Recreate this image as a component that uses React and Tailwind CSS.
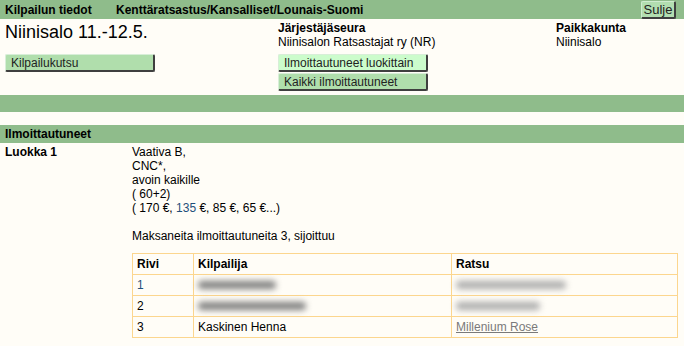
import React from "react";

const btn =
  "h-[18px] border-t border-l border-t-[#d8eed8] border-l-[#d8eed8] border-r-2 border-b-2 border-r-[#3f3f3f] border-b-[#3f3f3f] rounded-[2px] text-left pl-[5px] leading-[14px] text-[12px] text-[#222]";

function Blur({ w, dark }) {
  return (
    <div
      className={`h-[8px] rounded-full blur-[3px] ${dark ? "bg-[#7f7f7f]" : "bg-[#adadad]"}`}
      style={{ width: w }}
    />
  );
}

export default function App() {
  const rows = [
    { n: "1", rider: <Blur w={78} dark />, horse: <Blur w={110} /> },
    { n: "2", rider: <Blur w={108} dark />, horse: <Blur w={84} /> },
    {
      n: "3",
      rider: "Kaskinen Henna",
      horse: <span className="underline text-[#7a7a7a]">Millenium Rose</span>,
    },
  ];

  return (
    <div
      className="w-[684px] h-[346px] bg-[#fffdf7] text-black text-[12px] overflow-hidden"
      style={{ fontFamily: '"Liberation Sans", Arial, sans-serif' }}
    >
      {/* top bar */}
      <div className="h-[19px] bg-[#8fbc8b] flex items-center pl-[5px] pr-[8px] font-bold">
        <span className="w-[111px]">Kilpailun tiedot</span>
        <span>Kenttäratsastus/Kansalliset/Lounais-Suomi</span>
        <button className="ml-auto h-[18px] w-[35px] mt-[1px] bg-[#b2deb0] border-t border-l border-[#cfeccf] border-r-2 border-b-2 border-r-[#3f3f3f] border-b-[#3f3f3f] rounded-[2px] font-normal text-[13px] leading-[14px] text-[#222]">
          Sulje
        </button>
      </div>

      {/* info */}
      <div className="flex h-[76px]">
        <div className="w-[278px] pl-[5px]">
          <div className="text-[18px] leading-[22px] pt-[2px]">Niinisalo 11.-12.5.</div>
          <button className={`${btn} mt-[11px] w-[150px] bg-[#b0deac]`}>Kilpailukutsu</button>
        </div>
        <div className="w-[278px] pt-[2px]">
          <div className="font-bold leading-[14px]">Järjestäjäseura</div>
          <div className="leading-[14px]">Niinisalon Ratsastajat ry (NR)</div>
          <button className={`${btn} mt-[5px] w-[150px] bg-[#ccfccc] block`}>
            Ilmoittautuneet luokittain
          </button>
          <button className={`${btn} mt-[1px] w-[150px] bg-[#b0deac] block`}>
            Kaikki ilmoittautuneet
          </button>
        </div>
        <div className="pt-[2px]">
          <div className="font-bold leading-[14px]">Paikkakunta</div>
          <div className="leading-[14px]">Niinisalo</div>
        </div>
      </div>

      <div className="h-[17px] bg-[#8fbc8b]" />

      <div className="h-[13px]" />
      <div className="h-[18px] bg-[#8fbc8b] pl-[5px] font-bold leading-[18px]">Ilmoittautuneet</div>

      {/* class */}
      <div className="flex pt-[2px]">
        <div className="w-[132px] pl-[5px] font-bold leading-[14px]">Luokka 1</div>
        <div className="flex-1 pr-[6px]">
          <div className="leading-[14px]">
            <div>Vaativa B,</div>
            <div>CNC*,</div>
            <div>avoin kaikille</div>
            <div>( 60+2)</div>
            <div>
              ( 170 €, <span className="text-[#1f4f7a]">135</span> €, 85 €, 65 €...)
            </div>
            <div>&nbsp;</div>
            <div>Maksaneita ilmoittautuneita 3, sijoittuu</div>
          </div>
          <table className="mt-[10px] w-[546px] border-collapse border border-[#fcd68e]">
            <thead>
              <tr className="h-[21px]">
                <th className="w-[61px] border border-[#fcd68e] text-left font-bold pl-[4px]">Rivi</th>
                <th className="w-[258px] border border-[#fcd68e] text-left font-bold pl-[4px]">Kilpailija</th>
                <th className="border border-[#fcd68e] text-left font-bold pl-[4px]">Ratsu</th>
              </tr>
            </thead>
            <tbody>
              {rows.map((r) => (
                <tr key={r.n} className="h-[21px]">
                  <td className={`border border-[#fcd68e] pl-[4px] ${r.n === "1" ? "text-[#1f4f7a]" : ""}`}>
                    {r.n}
                  </td>
                  <td className="border border-[#fcd68e] pl-[4px]">{r.rider}</td>
                  <td className="border border-[#fcd68e] pl-[4px]">{r.horse}</td>
                </tr>
              ))}
            </tbody>
          </table>
        </div>
      </div>
    </div>
  );
}
